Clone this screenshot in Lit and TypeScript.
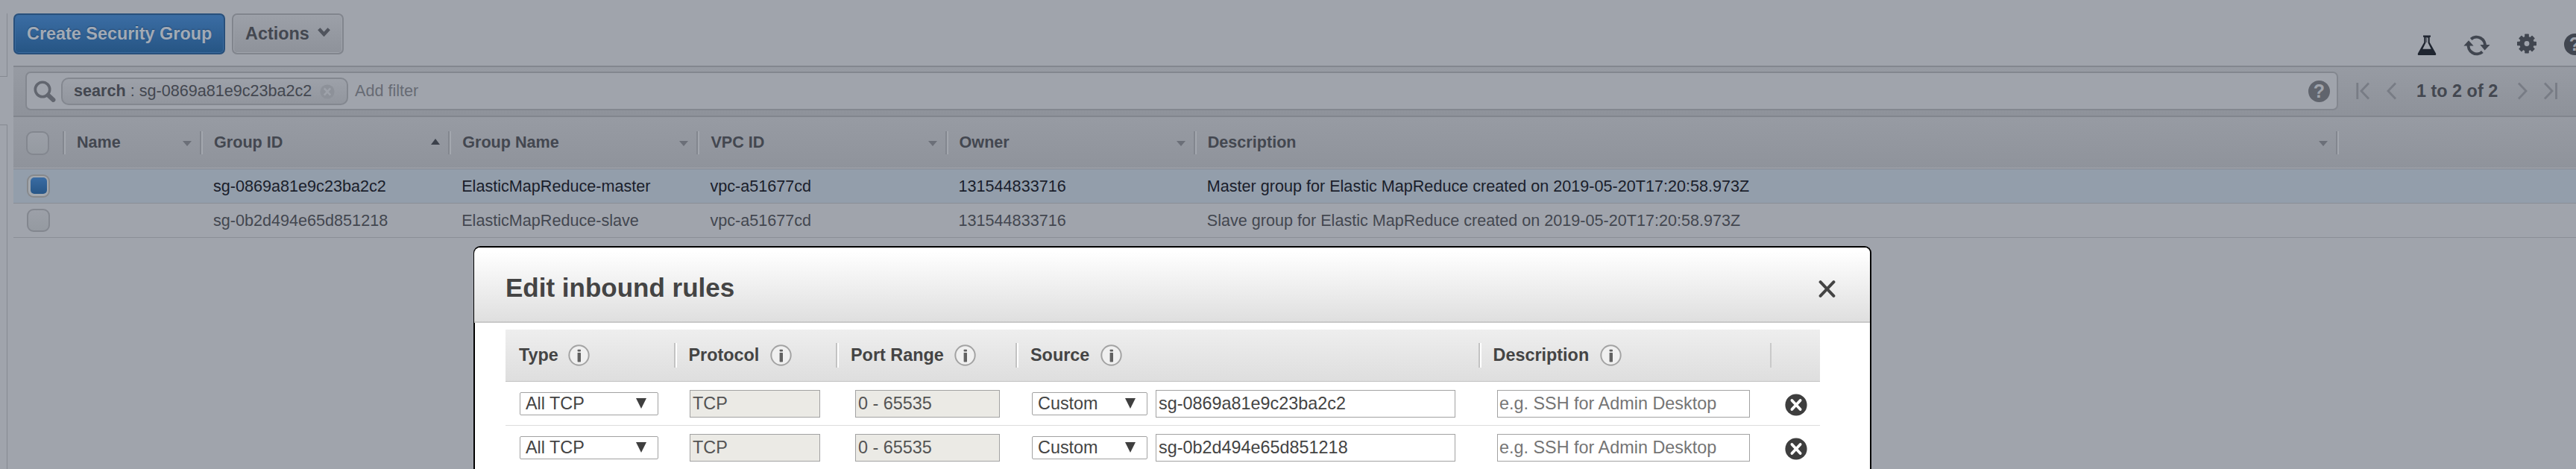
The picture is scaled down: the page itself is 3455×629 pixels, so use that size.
import { LitElement, html, css, svg } from "lit";
import { customElement } from "lit/decorators.js";
import { classMap } from "lit/directives/class-map.js";

interface Column {
  label: string;
  size: string;
  sort: string;
}

const COLUMNS: Column[] = [
  { label: "Name", size: "name", sort: "down" },
  { label: "Group ID", size: "std", sort: "up" },
  { label: "Group Name", size: "std", sort: "down" },
  { label: "VPC ID", size: "std", sort: "down" },
  { label: "Owner", size: "std", sort: "down" },
  { label: "Description", size: "desc", sort: "down" },
];

const GROUPS = [
  {
    selected: true,
    cells: ["", "sg-0869a81e9c23ba2c2", "ElasticMapReduce-master", "vpc-a51677cd", "131544833716",
      "Master group for Elastic MapReduce created on 2019-05-20T17:20:58.973Z"],
  },
  {
    selected: false,
    cells: ["", "sg-0b2d494e65d851218", "ElasticMapReduce-slave", "vpc-a51677cd", "131544833716",
      "Slave group for Elastic MapReduce created on 2019-05-20T17:20:58.973Z"],
  },
];

const RULES = [{ source: "sg-0869a81e9c23ba2c2" }, { source: "sg-0b2d494e65d851218" }];

@customElement("group-toolbar")
export class GroupToolbar extends LitElement {
  static styles = css`
    :host { display: flex; height: 88px; box-sizing: border-box; padding-top: 18px; justify-content: space-between; }
    .buttons { display: flex; gap: 9px; height: 55px; }
    .btn {
      box-sizing: border-box; height: 55px; border-radius: 7px; border: 2px solid #81858d;
      font: bold 23.4px "Liberation Sans", Arial, sans-serif; padding: 0 0 1px 16px;
      display: flex; align-items: center; white-space: nowrap; color: #434750;
      background: linear-gradient(#9ca0a8, #8e929a);
    }
    .primary {
      width: 284px; color: #a2aab5; border-color: #28507c;
      background: linear-gradient(#3b6da4, #265584); text-shadow: 0 -1px 1px #1f4672;
      box-shadow: inset 0 0 0 1px #3b6b9d;
    }
    .menu { width: 150px; gap: 11px; box-shadow: inset 0 0 0 1px #9fa3ab; }
    .chev { width: 17px; height: 12px; margin-top: -4px; }
    .icons { display: flex; width: 213px; height: 36px; margin-top: 26px; flex: none; }
    .icons svg { flex: none; display: block; }
    .flask { width: 26px; height: 27px; margin: 2.5px 36px 0 0; }
    .refresh { width: 36px; height: 28px; margin: 3px 36px 0 0; }
    .gear { width: 26px; height: 27px; margin: 0.7px 37px 0 0; }
    .help {
      flex: none; width: 29px; height: 29px; border-radius: 50%; background: #414650; color: #a0a4ac;
      font: bold 25px/29px "Liberation Sans", Arial, sans-serif; text-align: center; margin-top: 1px;
    }
  `;
  render() {
    return html`
      <div class="buttons">
        <div class="btn primary">Create Security Group</div>
        <div class="btn menu">Actions
          <svg class="chev" viewBox="0 0 17 12"><path d="M1.8 1.8L8.5 9L15.2 1.8" fill="none" stroke="#50545d" stroke-width="4.6"/></svg>
        </div>
      </div>
      <div class="icons">
        <svg class="flask" viewBox="0 0 26 27">
          <path d="M8 0.6h10v2.2h-1.3v7L25 24.4Q26 27 23.4 27H2.6Q0 27 1 24.4L9.3 9.8v-7H8z" fill="#1f2530"/>
          <path d="M11.4 3.4h3.2v7.2l4.1 8.2H7.3l4.1-8.2z" fill="#a0a4ac"/>
          <path d="M11.4 3.4h1.7v6.4h-1.7z" fill="#555a64"/>
        </svg>
        <svg class="refresh" viewBox="0 0 36 28">
          <g fill="none" stroke="#414650" stroke-width="4">
            <path d="M10.2 5.4A11.3 11.3 0 0 1 28.8 15.5"/>
            <path d="M25.4 22.5A11.3 11.3 0 0 1 6.9 11.5"/>
          </g>
          <path d="M22.4 13H35.6L28.6 20.4zM0.4 14.6H13.6L7 7.2z" fill="#414650"/>
        </svg>
        <svg class="gear" viewBox="0 0 26 27">
          <g fill="#414650" transform="translate(13 13.5)">
            ${[0, 45, 90, 135].map((a) => svg`<rect x="-2.9" y="-13.3" width="5.8" height="26.6" rx="0.8" transform=${`rotate(${a}) scale(${a % 90 ? 0.96 : 0.98})`}/>`)}
            <circle r="9.8"/>
          </g>
          <circle cx="13" cy="13.5" r="3.4" fill="#a0a4ac"/>
        </svg>
        <div class="help">?</div>
      </div>
    `;
  }
}

@customElement("filter-bar")
export class FilterBar extends LitElement {
  static styles = css`
    :host {
      display: flex; box-sizing: border-box; height: 69px; padding: 6px 0 0 16px;
      border-top: 2px solid #83878f; border-bottom: 2px solid #82868e;
      background: linear-gradient(#979ba3, #8e929a);
      font: 21.6px "Liberation Sans", Arial, sans-serif; color: #434750;
    }
    .box {
      box-sizing: border-box; width: 3102px; height: 52px; flex: none; display: flex; align-items: center;
      border: 2px solid #83878f; border-radius: 7px; background: #a0a4ac; padding: 0 9px 0 9px;
    }
    .glass { width: 30px; height: 30px; flex: none; margin-top: 2px; }
    .chip {
      box-sizing: border-box; display: flex; align-items: center; width: 385px; height: 37px; margin-left: 7px;
      border: 2px solid #83878f; border-radius: 10px; padding: 0 16px 0 15px; justify-content: space-between;
      background: linear-gradient(#9da1a9, #92969e); white-space: pre; flex: none;
    }
    .remove { width: 20px; height: 20px; margin-top: 2px; }
    .hint { flex: 1; margin-left: 9px; color: #676b74; }
    .help {
      width: 29px; height: 29px; border-radius: 50%; background: #60646d; color: #a0a4ac;
      font: bold 25px/29px "Liberation Sans", Arial, sans-serif; text-align: center;
    }
    .pager { display: flex; align-items: center; height: 52px; margin-left: 24px; flex: none; font: bold 23.4px "Liberation Sans", Arial, sans-serif; }
    .pager svg { width: 18px; height: 24px; fill: none; stroke: #787c85; stroke-width: 2.8; flex: none; }
    .pager .prev { margin: 0 0 0 23px; }
    .count { width: 112px; margin-left: 22px; white-space: nowrap; }
    .next { margin-left: 23px; }
    .last { margin-left: 18px; }
  `;
  render() {
    return html`
      <div class="box">
        <svg class="glass" viewBox="0 0 30 30">
          <circle cx="12" cy="12" r="9.7" fill="none" stroke="#62666f" stroke-width="3.6"/>
          <path d="M19.5 19.5L26.5 26" stroke="#62666f" stroke-width="5.8" stroke-linecap="round"/>
        </svg>
        <div class="chip">
          <span><b>search</b> : sg-0869a81e9c23ba2c2</span>
          <svg class="remove" viewBox="0 0 20 20"><circle cx="10" cy="10" r="9.6" fill="#8d9199"/><path d="M5.8 5.4L14.2 14.6M14.2 5.4L5.8 14.6" stroke="#9ea2aa" stroke-width="2.6"/></svg>
        </div>
        <div class="hint">Add filter</div>
        <div class="help">?</div>
      </div>
      <div class="pager">
        <svg viewBox="0 0 18 24"><path d="M1.8 1V23M17 1.5L7 12L17 22.5"/></svg>
        <svg class="prev" viewBox="0 0 18 24"><path d="M12 1.5L2 12L12 22.5"/></svg>
        <div class="count">1 to 2 of 2</div>
        <svg class="next" viewBox="0 0 18 24"><path d="M2 1.5L12 12L2 22.5"/></svg>
        <svg class="last" viewBox="0 0 18 24"><path d="M1 1.5L11 12L1 22.5M16.5 1V23"/></svg>
      </div>
    `;
  }
}

@customElement("group-table")
export class GroupTable extends LitElement {
  static styles = css`
    :host { display: block; font: 21.6px "Liberation Sans", Arial, sans-serif; color: #434750; }
    .head, .row { display: flex; box-sizing: border-box; align-items: center; }
    .head {
      height: 70px; border-bottom: 1px solid #82868e; box-shadow: inset 0 -1px #a6aab1;
      background: linear-gradient(#979ba3, #8f939b); font-weight: bold;
    }
    .row { height: 46px; border-bottom: 1px solid #8a8e96; }
    .row.selected { background: #939eab; color: #1a202b; }
    .pick { width: 66px; flex: none; }
    .cell, .hcell { box-sizing: border-box; flex: none; white-space: nowrap; }
    .hcell {
      height: 31px; border-left: 2px solid #83878f; box-shadow: inset 2px 0 #a3a7ae; padding: 0 11px 1px 17px;
      display: flex; align-items: center; justify-content: space-between;
    }
    .end { height: 31px; width: 4px; border-left: 2px solid #83878f; box-shadow: inset 2px 0 #a3a7ae; box-sizing: border-box; }
    .cell { padding: 1px 0 0 18px; }
    .name { width: 184px; }
    .std { width: 333.2px; }
    .desc { width: 1532.5px; }
    .check {
      box-sizing: border-box; width: 31px; height: 32px; border: 2px solid #83878f; border-radius: 9px; margin-left: 17px;
      background: linear-gradient(#9ca0a8, #959aa1); padding: 2.5px;
    }
    .row .check { margin: 0 0 1px 18px; height: 31px; }
    .selected .check { border-color: #87898c; background: #a3a8ae; }
    .dot { width: 22px; height: 22px; border-radius: 5px; background: linear-gradient(#3a6ca3, #275687); }
    .tri { width: 12px; height: 7px; margin-top: 2px; fill: #6b6f78; }
    .tri.up { height: 8px; margin-top: -3px; fill: #3c414b; }
  `;
  render() {
    return html`
      <div class="head">
        <div class="pick"><div class="check"></div></div>
        ${COLUMNS.map((c) => html`
          <div class=${classMap({ hcell: true, [c.size]: true })}>${c.label}
            ${c.sort === "up"
              ? html`<svg class="tri up" viewBox="0 0 12 8"><path d="M0 8L6 0L12 8z"/></svg>`
              : html`<svg class="tri" viewBox="0 0 12 7"><path d="M0 0H12L6 7z"/></svg>`}
          </div>`)}
        <div class="end"></div>
      </div>
      ${GROUPS.map((g) => html`
        <div class=${classMap({ row: true, selected: g.selected })}>
          <div class="pick"><div class="check">${g.selected ? html`<div class="dot"></div>` : ""}</div></div>
          ${g.cells.map((t, i) => html`<div class=${classMap({ cell: true, [COLUMNS[i].size]: true })}>${t}</div>`)}
        </div>`)}
    `;
  }
}

@customElement("inbound-rules-dialog")
export class InboundRulesDialog extends LitElement {
  static styles = css`
    :host {
      display: block; box-sizing: border-box; width: 1875px; height: 420px; background: #fff;
      border: 2px solid #000; border-bottom: none; border-radius: 9px 9px 0 0;
      font: 23.4px "Liberation Sans", Arial, sans-serif; color: #444;
    }
    .title {
      box-sizing: border-box; height: 101px; margin-left: -1px; border-bottom: 2px solid #c8c8c8; border-radius: 8px 7px 0 0;
      background: linear-gradient(#fff 5%, #dfdfdf); font-size: 35px; font-weight: bold;
      padding: 8px 46px 0 42px; display: flex; align-items: center; justify-content: space-between;
    }
    .close { width: 23px; height: 23px; margin-top: 4px; }
    .grid { width: 1763px; margin: 9px 0 0 41px; }
    .head, .row { display: grid; grid-template-columns: 225.5px 217.5px 241px 620.5px 391.5px 67px; align-items: center; box-sizing: border-box; }
    .head { height: 70px; border-bottom: 1px solid #c2c2c2; background: linear-gradient(#eee, #dedede); font-weight: bold; }
    .hcell {
      display: flex; align-items: center; gap: 14.6px; height: 33px; box-sizing: border-box;
      border-left: 2px solid #c3c3c3; box-shadow: inset 2px 0 #fff; padding-left: 18px;
    }
    .hcell span { margin-top: -1px; }
    .hcell:first-child { border-color: transparent; box-shadow: none; padding-left: 16px; gap: 13px; }
    .hcell:last-child { box-shadow: none; border-left-color: #c9c9c9; }
    .info { width: 29px; height: 29px; flex: none; }
    .row { height: 59px; border-bottom: 1px solid #ddd; }
    .cell { display: flex; align-items: center; }
    .field, .select { box-sizing: border-box; border: 1.4px solid #a2a2a2; display: flex; align-items: center; white-space: nowrap; }
    .field { height: 37px; padding-left: 3px; }
    .field.off { background: #ebeae5; color: #545454; }
    .hint { color: #757575; }
    .select { height: 31px; border-radius: 2px; justify-content: space-between; padding: 0 15px 0 7px; }
    .select svg { width: 14px; height: 14px; fill: #3f3f3f; }
    .type { width: 186px; margin-left: 19px; }
    .proto { width: 175px; margin-left: 21.5px; }
    .port { width: 194px; margin-left: 26px; }
    .kind { width: 155px; margin-left: 22px; }
    .src { width: 402px; margin-left: 11px; }
    .note { width: 339px; margin-left: 25.5px; padding-left: 2px; }
    .del { width: 30px; height: 30px; margin: 3px 0 0 20px; }
  `;
  private header(label: string) {
    return html`<div class="hcell"><span>${label}</span>
      <svg class="info" viewBox="0 0 29 29">
        <circle cx="14.5" cy="14.5" r="13.2" fill="#f0f0f0" stroke="#a3a3a3" stroke-width="2"/>
        <rect x="12.6" y="6.8" width="4.4" height="2.8" rx="0.8" fill="#626262"/>
        <rect x="12.6" y="11" width="4.4" height="12.4" rx="0.6" fill="#626262"/>
      </svg></div>`;
  }
  private select(kind: string, label: string) {
    return html`<div class="select ${kind}">${label}<svg viewBox="0 0 14 14"><path d="M0 0H14L7 14z"/></svg></div>`;
  }
  render() {
    return html`
      <div class="title">Edit inbound rules
        <svg class="close" viewBox="0 0 23 23"><path d="M2.6 2.2L20.4 20.8M20.4 2.2L2.6 20.8" stroke="#444" stroke-width="4" stroke-linecap="round"/></svg>
      </div>
      <div class="grid">
        <div class="head">
          ${["Type", "Protocol", "Port Range", "Source", "Description"].map((l) => this.header(l))}
          <div class="hcell"></div>
        </div>
        ${RULES.map((r) => html`
          <div class="row">
            <div class="cell">${this.select("type", "All TCP")}</div>
            <div class="cell"><div class="field off proto">TCP</div></div>
            <div class="cell"><div class="field off port">0 - 65535</div></div>
            <div class="cell">${this.select("kind", "Custom")}<div class="field src">${r.source}</div></div>
            <div class="cell"><div class="field note hint">e.g. SSH for Admin Desktop</div></div>
            <div class="cell">
              <svg class="del" viewBox="0 0 30 30"><circle cx="15" cy="15" r="14.6" fill="#3e3e3e"/><path d="M9.4 9L20.6 21M20.6 9L9.4 21" stroke="#fff" stroke-width="3.8" stroke-linecap="round"/></svg>
            </div>
          </div>`)}
      </div>
    `;
  }
}

@customElement("app-root")
export class AppRoot extends LitElement {
  static styles = css`
    :host { display: block; position: relative; width: 100%; height: 629px; overflow: hidden; background: #a0a4ac; }
    .page { display: flex; gap: 8px; height: 629px; }
    .rail { width: 10px; flex: none; display: flex; flex-direction: column; gap: 64px; padding-top: 18px; box-sizing: border-box; }
    .panel { box-sizing: border-box; border-right: 1px solid #868a92; }
    .upper { height: 85px; border-bottom: 1px solid #868a92; }
    .lower { flex: 1; border-top: 1px solid #868a92; }
    .main { flex: 1; min-width: 0; overflow: hidden; }
    .dialog { position: absolute; left: 635px; top: 330px; }
  `;
  render() {
    return html`
      <div class="page">
        <div class="rail"><div class="panel upper"></div><div class="panel lower"></div></div>
        <div class="main">
          <group-toolbar></group-toolbar>
          <filter-bar></filter-bar>
          <group-table></group-table>
        </div>
      </div>
      <inbound-rules-dialog class="dialog"></inbound-rules-dialog>
    `;
  }
}
